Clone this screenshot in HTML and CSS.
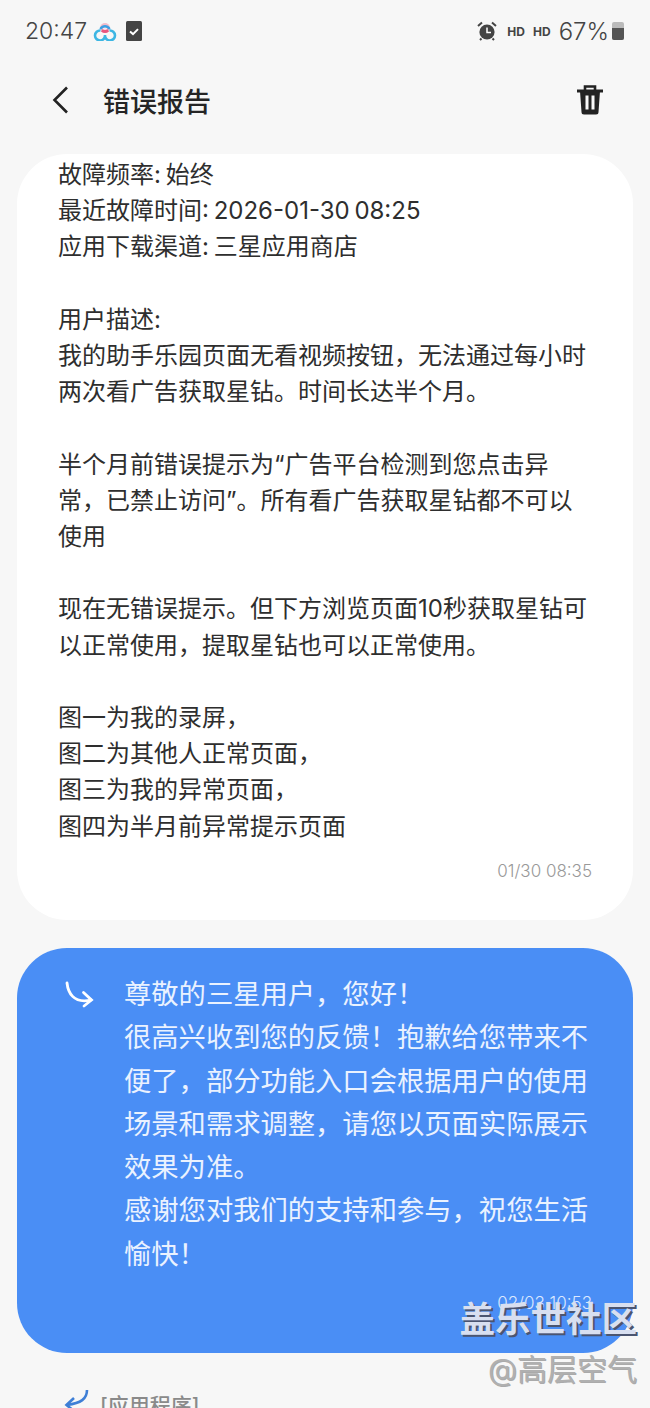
FILE: index.html
```html
<!DOCTYPE html>
<html lang="zh-CN">
<head>
  <meta charset="UTF-8">
  <meta name="viewport" content="width=device-width, initial-scale=1.0">
  <title>错误报告</title>
  <link rel="stylesheet" href="styles.css">
</head>
<body>
  <div class="status-bar">
    <div class="status-left">
      <span class="clock">20:47</span>
      <svg class="app-icon" width="26" height="20" viewBox="0 0 26 20">
        <circle cx="13" cy="7" r="5" fill="#f3bccb"/>
        <path d="M9 10.500q4 3 8 0L13 5z" fill="#e8577f"/>
        <circle cx="13" cy="6.500" r="2.500" fill="#fbe3ea"/>
        <path d="M8.500 9.500a5 5 0 1 0 4.500 4.500 M13 14a5 5 0 1 0 4.500-4.500" fill="none" stroke="#3db6e3" stroke-width="2.600"/>
        <path d="M8.500 8a5 5 0 0 1 9 0" fill="none" stroke="#3d9fe3" stroke-width="2.600"/>
      </svg>
      <svg class="check-icon" width="16" height="20" viewBox="0 0 16 20">
        <rect width="16" height="20" rx="1.500" fill="#444"/>
        <path d="M4 10.500l3 2.600 5-5" fill="none" stroke="#fff" stroke-width="2"/>
      </svg>
    </div>
    <div class="status-right">
      <svg width="20" height="20" viewBox="0 0 20 20">
        <circle cx="10" cy="11" r="7.600" fill="#444"/>
        <path d="M1 5l4-3.500M19 5l-4-3.500M4.500 17.500l-1.500 1.500M15.500 17.500l1.500 1.500" stroke="#444" stroke-width="2"/>
        <path d="M10 6.500v5h4" fill="none" stroke="#fff" stroke-width="1.500"/>
      </svg>
      <span class="hd first-hd">HD</span>
      <span class="hd">HD</span>
      <span class="battery-text">67%</span>
      <span class="battery"><span class="battery-fill"></span></span>
    </div>
  </div>

  <header class="title-bar">
    <svg class="back-icon" width="18" height="30" viewBox="0 0 18 30">
      <path d="M16 2.500L3.500 15 16 27.500" fill="none" stroke="#222" stroke-width="2.600"/>
    </svg>
    <h1>错误报告</h1>
    <svg class="trash-icon" width="28" height="32" viewBox="0 0 28 32">
      <path d="M1 7h26" stroke="#222" stroke-width="3"/>
      <path d="M9 7V2.500h10V7" fill="none" stroke="#222" stroke-width="2.600"/>
      <path d="M4 7l1.500 21a2.500 2.500 0 0 0 2.500 2.500h12a2.500 2.500 0 0 0 2.500-2.500L24 7z" fill="#222"/>
      <path d="M11 11.500v14M17 11.500v14" stroke="#f7f7f7" stroke-width="3"/>
    </svg>
  </header>

  <section class="report-card">
    <p class="report-text">故障频率: 始终<br>最近故障时间: 2026-01-30 08:25<br>应用下载渠道: 三星应用商店<br><br>用户描述:<br>我的助手乐园页面无看视频按钮，无法通过每小时<br>两次看广告获取星钻。时间长达半个月。<br><br>半个月前错误提示为“广告平台检测到您点击异<br>常，已禁止访问”。所有看广告获取星钻都不可以<br>使用<br><br>现在无错误提示。但下方浏览页面10秒获取星钻可<br>以正常使用，提取星钻也可以正常使用。<br><br>图一为我的录屏，<br>图二为其他人正常页面，<br>图三为我的异常页面，<br>图四为半月前异常提示页面</p>
    <div class="report-time">01/30 08:35</div>
  </section>

  <section class="reply-card">
    <svg class="reply-icon" width="30" height="28" viewBox="0 0 30 28">
      <path d="M3 3C4 12 9 24 27 20" fill="none" stroke="#fff" stroke-width="2.800" stroke-linecap="round"/>
      <path d="M19.500 12.500L27.500 20 20 26" fill="none" stroke="#fff" stroke-width="2.800" stroke-linecap="round"/>
    </svg>
    <div class="reply-body">
      <p class="reply-text">尊敬的三星用户，您好！<br>很高兴收到您的反馈！抱歉给您带来不<br>便了，部分功能入口会根据用户的使用<br>场景和需求调整，请您以页面实际展示<br>效果为准。<br>感谢您对我们的支持和参与，祝您生活<br>愉快！</p>
      <div class="reply-time">02/03 10:53</div>
    </div>
  </section>

  <div class="next-item">
    <svg class="next-icon" width="28" height="24" viewBox="0 0 28 24">
      <path d="M24 1c0 9-6 13-20 15" fill="none" stroke="#3f7fd6" stroke-width="2.600"/>
      <path d="M11 9l-7.500 7 7.500 6" fill="none" stroke="#3f7fd6" stroke-width="2.600"/>
    </svg>
    <span>[应用程序]</span>
  </div>

  <div class="watermark">
    <div class="watermark-main">盖乐世社区</div>
    <div class="watermark-sub">@高层空气</div>
  </div>
</body>
</html>
```

FILE: styles.css
```css
html, body {
  height: 1408px;
  overflow: hidden;
}
body {
  margin: 0;
  position: relative;
  background: #f7f7f7;
  color: #2a2a2a;
  font-family: "Inter", "Noto Sans CJK SC", sans-serif;
}
p {
  margin: 0;
}

/* Status bar */
.status-bar {
  height: 62px;
  box-sizing: border-box;
  padding: 18px 26px 0 25px;
  display: flex;
  justify-content: space-between;
  align-items: flex-start;
  color: #444;
}
.status-left, .status-right {
  display: flex;
  align-items: center;
  height: 26px;
}
.clock {
  font-size: 23px;
  font-weight: 300;
}
.app-icon {
  margin-left: 5px;
}
.check-icon {
  margin-left: 8px;
}
.hd {
  font-size: 12px;
  font-weight: 700;
  margin-left: 8px;
}
.first-hd {
  margin-left: 10px;
}
.battery-text {
  font-size: 24px;
  font-weight: 300;
  margin-left: 8px;
}
.battery {
  width: 12px;
  height: 18px;
  margin-left: 3px;
  background: #bbb;
  border-radius: 2px;
  position: relative;
  display: block;
}
.battery-fill {
  position: absolute;
  left: 0;
  right: 0;
  bottom: 0;
  height: 12px;
  background: #555;
  border-radius: 0 0 2px 2px;
}

/* Title */
.title-bar {
  height: 92px;
  display: flex;
  align-items: center;
  padding: 0 46px 0 51px;
  box-sizing: border-box;
  margin-top: -8px;
  margin-bottom: 8px;
}
.title-bar h1 {
  font-size: 27px;
  font-weight: 500;
  margin: 0 0 0 34px;
  flex: 1;
  color: #252525;
}

/* Cards */
.report-card {
  margin: 0 17px;
  height: 766px;
  box-sizing: border-box;
  padding: 3px 41px 0;
  background: #fff;
  border-radius: 50px;
}
.report-text {
  font-size: 24px;
  line-height: 36.2px;
  word-spacing: -2px;
  white-space: nowrap;
  color: #2e2e2e;
}
.report-time {
  text-align: right;
  font-size: 17px;
  font-weight: 300;
  color: #999;
  margin-top: 16px;
}
.reply-card {
  margin: 28px 17px 0;
  height: 405px;
  box-sizing: border-box;
  padding: 25px 0 0 47px;
  background: #4a8ef5;
  border-radius: 50px;
  display: flex;
  color: #fff;
}
.reply-icon {
  margin-top: 7px;
  flex-shrink: 0;
}
.reply-body {
  margin-left: 30px;
  flex: 1;
  padding-right: 41px;
}
.reply-text {
  font-size: 27.3px;
  line-height: 43.3px;
  white-space: nowrap;
  color: #eaf2ff;
}
.reply-time {
  text-align: right;
  font-size: 17px;
  font-weight: 300;
  color: #dbe8ff;
  margin-top: 17px;
}

.next-item {
  display: flex;
  align-items: flex-start;
  margin: 36px 0 0 63px;
  font-size: 21px;
  font-weight: 500;
  color: #8a8a8a;
  gap: 9px;
}

/* Watermark over the page */
.watermark {
  position: absolute;
  right: 13px;
  top: 1298px;
  text-align: right;
}
.watermark-main {
  font-size: 35.500px;
  line-height: 44px;
  font-weight: 700;
  color: #d8dff0;
  text-shadow: 2px 2px 0 #4b5570;
}
.watermark-sub {
  font-size: 30px;
  line-height: 40px;
  margin-top: 7px;
  color: #b0b0b0;
  text-shadow: 1px 1px 0 #aaa;
}
```
